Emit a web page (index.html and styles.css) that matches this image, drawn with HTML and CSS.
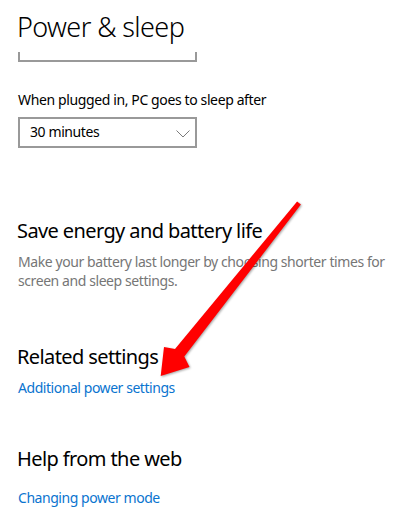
FILE: index.html
```html
<!DOCTYPE html>
<html lang="en">
<head>
<meta charset="utf-8">
<title>Power &amp; sleep</title>
<link rel="stylesheet" href="styles.css">
</head>
<body>
<main class="page">
  <h1 class="title">Power &amp; sleep</h1>
  <div class="clipped-box"></div>
  <p class="label">When plugged in, PC goes to sleep after</p>
  <div class="dropdown">
    <span class="dropdown-value">30 minutes</span>
    <svg class="chevron" width="14" height="8" viewBox="0 0 14 8"><polyline points="0.5,0.5 7,7 13.5,0.5" fill="none" stroke="#7a7a7a" stroke-width="1"/></svg>
  </div>
  <h2 class="section-title first">Save energy and battery life</h2>
  <p class="desc">Make your battery last longer by choosing shorter times for<br>screen and sleep settings.</p>
  <h2 class="section-title related">Related settings</h2>
  <a class="link link-related" href="#">Additional power settings</a>
  <h2 class="section-title help">Help from the web</h2>
  <a class="link link-help" href="#">Changing power mode</a>
</main>
<svg class="arrow" width="411" height="527" viewBox="0 0 411 527">
  <polygon points="297.1,201.4 175,349 164,347 160.7,376 189.5,367 184.3,356.5 300.9,204.6" fill="#ff0000"/>
</svg>
</body>
</html>
```
FILE: styles.css
```css
html, body {
  margin: 0;
  padding: 0;
  background: #ffffff;
}
body {
  font-family: "Noto Sans", "Open Sans", sans-serif;
  color: #000000;
  width: 411px;
  height: 527px;
  overflow: hidden;
  position: relative;
}
.page {
  display: flex;
  flex-direction: column;
  align-items: flex-start;
  padding: 9px 0 0 17px;
}
.title {
  margin: 0;
  font-size: 27px;
  line-height: 36px;
  font-weight: 300;
  letter-spacing: -0.6px;
}
.clipped-box {
  margin: 7px 0 0 1px;
  width: 179px;
  height: 10px;
  box-sizing: border-box;
  border: 2px solid #999999;
  border-top: none;
}
.label {
  margin: 28px 0 0 1px;
  font-size: 14px;
  line-height: 20px;
  letter-spacing: -0.38px;
}
.dropdown {
  margin: 7px 0 0 1px;
  width: 179px;
  height: 31px;
  box-sizing: border-box;
  border: 2px solid #999999;
  padding: 3px 0 0 10px;
  display: flex;
  align-items: flex-start;
  justify-content: space-between;
  font-size: 14px;
  line-height: 20px;
  letter-spacing: -0.4px;
}
.chevron {
  margin: 8px 5px 0 0;
}
.section-title {
  margin: 0;
  font-size: 20px;
  line-height: 28px;
  font-weight: 400;
  letter-spacing: -0.6px;
}
.section-title.first { margin-top: 69px; }
.desc {
  margin: 7px 0 0 1px;
  font-size: 14px;
  line-height: 19px;
  color: #767676;
  letter-spacing: -0.42px;
}
.section-title.related { margin-top: 53px; }
.section-title.help { margin-top: 47px; }
.link {
  margin-left: 1px;
  font-size: 14px;
  line-height: 20px;
  color: #0a74cf;
  text-decoration: none;
  letter-spacing: -0.45px;
}
.link-related { margin-top: 7px; }
.link-help { margin-top: 15px; }
.arrow {
  position: absolute;
  top: 0;
  left: 0;
  pointer-events: none;
  filter: drop-shadow(1px 1px 1px rgba(0, 0, 0, 0.35));
}
```
